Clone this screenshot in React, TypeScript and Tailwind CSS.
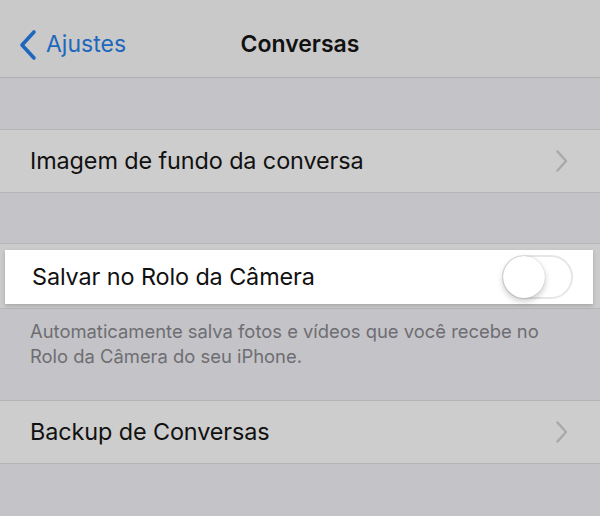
import React from 'react';

const Chevron = () => (
    <svg width="12" height="22" viewBox="0 0 12 22" fill="none" className="shrink-0">
        <path d="M1.5 1.5 L10 11 L1.5 20.5" stroke="#a9a9ab" strokeWidth="2.4" strokeLinecap="round" strokeLinejoin="round" />
    </svg>
);

const Row = ({ label }: { label: string }) => (
    <div className="flex items-center justify-between h-[64px] bg-[#cdcdcd] border-y border-[#b4b4b6] pl-[30px] pr-[32px]">
        <span className="text-[23.4px] text-[#111111] tracking-[-0.1px]">{label}</span>
        <Chevron />
    </div>
);

export default function App() {
    return (
        <div className="w-[600px] h-[516px] overflow-hidden bg-[#c3c3c8] font-['Inter','Noto_Sans',sans-serif]">
            <div className="relative flex items-center h-[78px] pt-[12px] bg-[#c9c9c9] border-b border-[#b0b0b2]">
                <div className="flex items-center gap-[8px] pl-[18px] text-[#1d67bd]">
                    <svg width="20" height="32" viewBox="0 0 20 32" fill="none">
                        <path d="M16 3 L4 16 L16 29" stroke="#1d67bd" strokeWidth="3.6" strokeLinecap="round" strokeLinejoin="round" />
                    </svg>
                    <span className="text-[23px]">Ajustes</span>
                </div>
                <span className="absolute left-0 right-0 text-center text-[23px] font-semibold text-[#111111] pointer-events-none">
                    Conversas
                </span>
            </div>

            <div className="h-[51px]" />
            <Row label="Imagem de fundo da conversa" />

            <div className="h-[50px]" />

            <div className="bg-[#cbcbcc] pl-[5px] pr-[7px] pt-[6px] pb-[4px] border-y border-[#b8b8ba]">
                <div className="flex items-center justify-between h-[54px] bg-white shadow-[0_2px_4px_rgba(0,0,0,0.18)] pl-[27px] pr-[20px]">
                    <span className="text-[23.4px] text-[#111111] tracking-[-0.1px]">Salvar no Rolo da Câmera</span>
                    <div className="w-[71px] h-[44px] rounded-full border-2 border-[#e6e6e6] bg-white relative">
                        <div className="absolute left-[-1px] top-[-1px] w-[42px] h-[42px] rounded-full bg-white shadow-[0_3px_6px_rgba(0,0,0,0.22),0_0_1px_rgba(0,0,0,0.25)]" />
                    </div>
                </div>
            </div>

            <div className="px-[30px] pt-[10px] text-[18.4px] leading-[25px] text-[#6e6e72]">
                <p>Automaticamente salva fotos e vídeos que você recebe no</p>
                <p>Rolo da Câmera do seu iPhone.</p>
            </div>

            <div className="h-[31px]" />
            <Row label="Backup de Conversas" />
        </div>
    );
}
